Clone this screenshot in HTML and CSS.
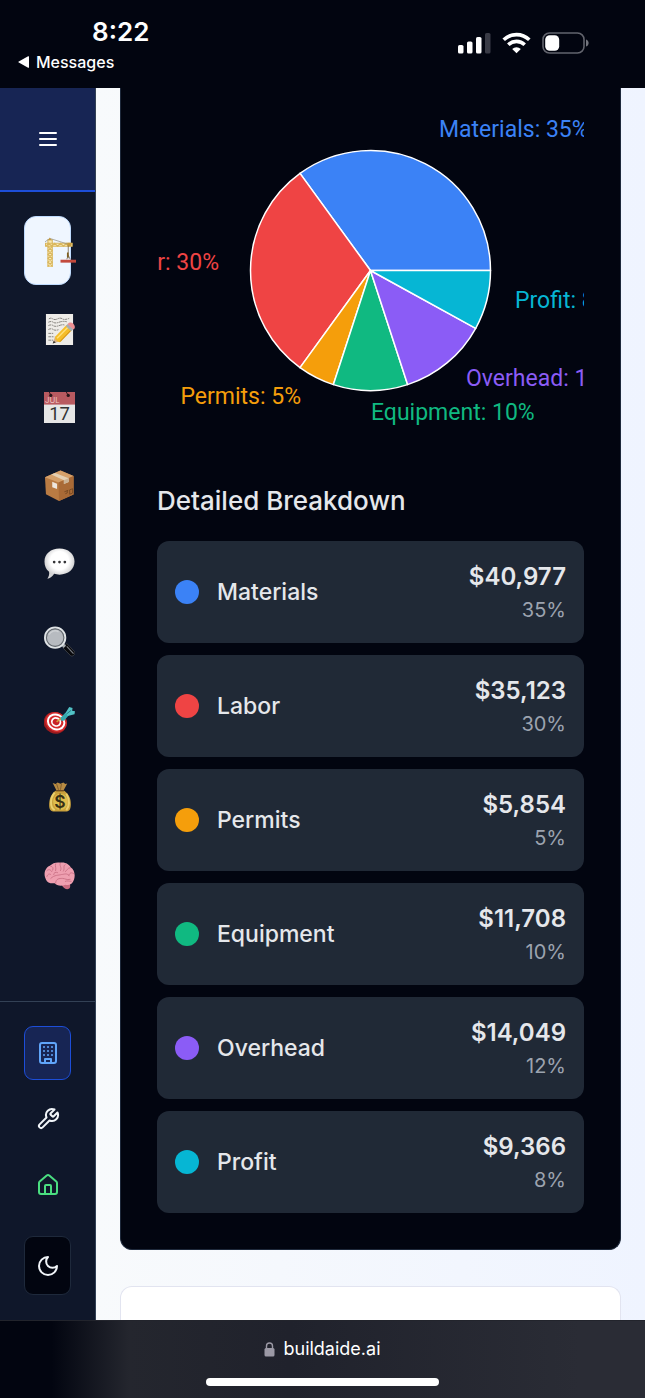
FILE: index.html
```html
<!DOCTYPE html>
<html lang="en">
<head>
<meta charset="utf-8">
<meta name="viewport" content="width=device-width, initial-scale=1">
<title>Detailed Breakdown</title>
<link rel="stylesheet" href="styles.css">
</head>
<body>
<header class="status">
  <div class="status-left">
    <time class="clock">8:22</time>
    <button class="back" type="button">
      <svg width="12" height="12" viewBox="0 0 12 12" aria-hidden="true"><path d="M11 .8v10.400a.6.6 0 0 1-.9.500L.8 6.600a.7.7 0 0 1 0-1.200L10.100.300a.6.6 0 0 1 .9.500z" fill="#fff"/></svg>
      Messages
    </button>
  </div>
  <div class="status-icons">
    <svg width="33" height="22" viewBox="0 0 33 22" aria-label="Signal" fill="#fff"><rect x="0" y="13" width="5.500" height="8.500" rx="1.600"/><rect x="9" y="9.500" width="5.500" height="12" rx="1.600"/><rect x="18" y="5" width="5.500" height="16.500" rx="1.600"/><rect x="27" y="1" width="5.500" height="20.500" rx="1.600" fill="#393b46"/></svg>
    <svg width="29" height="22" viewBox="0 0 29 22" aria-label="Wi-Fi" fill="none" stroke="#fff" stroke-width="3.600"><path d="M1.700 7.800a18.300 18.300 0 0 1 25.600 0"/><path d="M6.300 12.700a11.800 11.800 0 0 1 16.400 0"/><path d="M14.500 21.300l-4.300-4.300a6.200 6.200 0 0 1 8.600 0z" fill="#fff" stroke="none"/></svg>
    <svg width="47" height="22" viewBox="0 0 47 22" aria-label="Battery"><rect x="1" y="1" width="41" height="20" rx="6.500" fill="none" stroke="#62646d" stroke-width="1.600"/><rect x="3.200" y="3.200" width="14" height="15.600" rx="4.500" fill="#fff"/><path d="M44 7.500c3.500 1 3.500 6 0 7z" fill="#72747c"/></svg>
  </div>
</header>

<div class="app">
  <aside class="sidebar">
    <div class="sidebar-head">
      <button class="menu" type="button" aria-label="Menu"><svg width="18" height="16" viewBox="0 0 18 16" stroke="#fff" stroke-width="2" stroke-linecap="round"><path d="M1 2h16M1 8h16M1 14h16"/></svg></button>
    </div>
    <nav class="tools" aria-label="Tools">
      <button class="tool active" type="button" aria-label="Construction">
        <svg viewBox="0 0 32 32"><g fill="none" stroke="#d9b65c" stroke-width="1.100"><path d="M3 32V4h4.500v28zM.5 7.500h27.500v3H.5z" fill="#f8e9b6"/><path d="M3 11l4.500 4L3 19l4.500 4L3 27l4.500 4M7.500 11L3 15l4.500 4L3 23l4.500 4L3 31"/><path d="M1 10.500l3-3 3 3 3-3 3 3 3-3 3 3 3-3 3 3 3-3"/></g><path d="M0 6L5 2.500l19 6" fill="none" stroke="#8e8b80" stroke-width=".7"/><path d="M3.500 4l1.500-2.500L6.500 4zM23 7h4v3.500h-4z" fill="#c79b3c"/><path d="M24 10v13M22.500 24l1.500-4 2 4" fill="none" stroke="#76634a" stroke-width=".8"/><path d="M23.500 17v5" stroke="#806020" stroke-width="1.700"/><path d="M16 24.500h16v3H16z" fill="#c34a3d"/></svg>
      </button>
      <button class="tool" type="button" aria-label="Estimate notes">
        <svg viewBox="0 0 32 32"><path d="M2 0h28v32H2z" fill="#eeece8"/><g fill="none" stroke="#77756f" stroke-width=".9" stroke-dasharray="3 .7 1.500 .5"><path d="M5 5q2-1.500 4 0t5 0 5 0 7-.5M4.500 8.500q3-1.500 5 0t6 0 8-.5M4.500 12q3-1.500 5 0t6 0 6-.5M4.500 16q3-1.500 5 0t6 0M4.500 20h5M4.500 23.500h6M4.500 27h5"/></g><path d="M9 30.500l2.500-7.500 5 5z" fill="#d9b184"/><path d="M9 30.500l1-3 2.200 2z" fill="#333"/><path d="M11.500 23.500L23.500 11l5.500 5.500L17 29c-2.500.5-6-2.500-5.500-5.500z" fill="#f5bd28"/><path d="M13.500 25L26 12.500" stroke="#ffe07a" stroke-width="1.500"/><path d="M16.500 28.500L28.500 16" stroke="#c98819" stroke-width="1"/><path d="M22.500 12.300l2.300-2.300 5.500 5.500-2.300 2.300z" fill="#a4adb4"/><path d="M24.300 10.500c1.500-2.500 4.500-2 6.200-.2s2 4.200-.2 5.700z" fill="#ec8e92"/></svg>
      </button>
      <button class="tool" type="button" aria-label="Calendar">
        <svg viewBox="0 0 32 32"><path d="M0 0h32v32H0z" fill="#e6e6e6"/><path d="M0 0h32v13H0z" fill="#b85a60"/><circle cx="7" cy="3.500" r="1.700" fill="#29171b"/><circle cx="25" cy="3.500" r="1.700" fill="#29171b"/><path d="M5.500 0l1.500 3.500M23 0l2 3.500" stroke="#29171b"/><text class="cal-month" x="1" y="11.500">JUL</text><text class="cal-day" x="16" y="29" text-anchor="middle">17</text></svg>
      </button>
      <button class="tool" type="button" aria-label="Materials">
        <svg viewBox="0 0 32 32"><path d="M1 7.500L17 .5l13.500 5.700v19L15.500 32 2 25z" fill="#b97b43"/><path d="M1 7.500L17 .5l13.500 5.700L15 13z" fill="#d5a06a"/><path d="M15 13l15.500-6.800v19L15.500 32z" fill="#a96a36"/><path d="M7.500 4.700l4-1.700L25.500 8.500v4l-5 2V10.700z" fill="#e5d0b3"/><path d="M20.500 10.700l5-2.200v4l-5 2z" fill="#cab295"/><path d="M8.500 12l5 2.200v5.500l-5-2z" fill="#eee7df"/><path d="M21 22.500l4-1.500M22 24.500l2-.8v-2.500M26.500 20.500l3-1.200v4.500l-3 1.200z" fill="none" stroke="#6e431f" stroke-width=".8"/></svg>
      </button>
      <button class="tool" type="button" aria-label="Messages">
        <svg viewBox="0 0 32 32"><defs><radialGradient id="bubble" cy=".4"><stop offset=".6" stop-color="#fff"/><stop offset="1" stop-color="#d2d2d3"/></radialGradient></defs><path d="M16 .5c9 0 15.500 5.500 15.500 13.500S25 27.500 16 27.500c-2 0-4-.2-5.500-.8-2 3-4.500 4.800-7 5 1.600-2.200 2.200-4.700 1.700-7.200C2 22 .5 18.500.5 14 .5 6 7 .5 16 .5z" fill="url(#bubble)"/><g fill="#343437"><circle cx="10.500" cy="14.500" r="1.400"/><circle cx="16" cy="14.500" r="1.400"/><circle cx="21.500" cy="14.500" r="1.400"/></g></svg>
      </button>
      <button class="tool" type="button" aria-label="Search">
        <svg viewBox="0 0 32 32"><path d="M19.500 22.500l4-4.500L31.500 26.500c1.500 2.500-1.500 5.500-4 4.200z" fill="#08090c" stroke="#4b4e55" stroke-width=".7"/><path d="M23.500 21l7 7.500" stroke="#777a80" stroke-width="1.300"/><path d="M18.500 18.500l3 3" stroke="#a9afb3" stroke-width="3.500"/><circle cx="11.500" cy="12" r="10.500" fill="#b7bbc0" stroke="#dfe3e5" stroke-width="2"/><circle cx="11.500" cy="12" r="9" fill="none" stroke="#62686e" stroke-width="1.100"/><path d="M5 9c2-4 7-5 10-3" fill="none" stroke="#cdd0d3" stroke-width="1.500"/></svg>
      </button>
      <button class="tool" type="button" aria-label="Goals">
        <svg viewBox="0 0 32 32"><g transform="translate(0 1)"><ellipse cx="11.500" cy="18.500" rx="12" ry="11" fill="#9f1b1e" transform="rotate(25 11.500 18.500)"/><ellipse cx="12.500" cy="17.500" rx="11.500" ry="10" fill="#d42b2c" transform="rotate(25 12.500 17.500)"/><ellipse cx="12.500" cy="17.500" rx="8.700" ry="7.500" fill="none" stroke="#fff" stroke-width="2" transform="rotate(25 12.500 17.500)"/><ellipse cx="12.500" cy="17.500" rx="4.500" ry="4" fill="#c92327" stroke="#fff" stroke-width="1.800" transform="rotate(25 12.500 17.500)"/><path d="M13 17.500L20 12" stroke="#d0a43f" stroke-width="1.500"/><path d="M17 13.500l5-5.500 4 2-5 6-3 .5z" fill="#36a9ad"/><path d="M22 8.500L26 2l3.500 1-.5 3 3 .5-.5 3-7 2z" fill="#51c1c5"/><path d="M23 9.500l5-4" stroke="#237e86"/></g></svg>
      </button>
      <button class="tool" type="button" aria-label="Budget">
        <svg viewBox="0 0 32 32"><path d="M9 1l3 1 2-1.500 3 1.200 3-1.200 2 1.500 2-.5-4 7.500h-7z" fill="#b78b43"/><path d="M13 2l2 6M18 2l-1 6" stroke="#775327" stroke-width=".8"/><path d="M12 9h9c5 4 7 8.500 6.700 14.500-.2 5.500-2 7-5.500 7H11c-4 0-5.700-2-5.700-6.500C5.300 18 7 12.500 12 9z" fill="#c9a13c"/><path d="M11 11c-5 6-5 15 0 18M23 12c4 7 3 13 0 17" stroke="#ead06e" fill="none" stroke-width="2"/><ellipse cx="17" cy="20.500" rx="7.500" ry="8.500" fill="#dfbd4d"/><path d="M12.500 9h8" stroke="#6f4c20" stroke-width="1.400"/><text class="bag-sign" x="16.500" y="27" text-anchor="middle">$</text></svg>
      </button>
      <button class="tool" type="button" aria-label="Insights">
        <svg viewBox="0 0 32 32"><path d="M18 25c2 5 7 6.500 8.500 4 1-1.500.5-3.500 0-5z" fill="#c96b80"/><path d="M2 20C-1 15 1 8 6 6c3-3 7-4 11-3.200 5-.8 9 1.800 10.500 4.700 4 2.500 5 8.500 3.500 12.500-1.500 5-5 6.500-9 5.500-4 2-9 1-11-1.500C7 24.500 3 23.500 2 20z" fill="#ee9fb0"/><g fill="none" stroke="#c96f84" stroke-width=".9" stroke-linecap="round"><path d="M3 17c1-3 3-3 4-2M3 11c2-2 4-1 5 1M7 6.500c2 0 3 2 2 4M12 4c-1 3 1 4 0 7M17 3c-2 3 2 4 0 8M22 4.500c-3 2 0 4-2 7M27 8c-3 0-3 3-5 4M30.500 14c-3-2-4 0-5 2M7 19c4-4 8-3 11-4 3 0 5-2 8 1M12 24c0-5 4-5 7-5s4 2 8 1M10 15c0-2 2-3 4-2M22 22c2-1 4 0 6 0"/></g></svg>
      </button>
    </nav>
    <div class="modes">
      <button class="mode selected" type="button" aria-label="Commercial"><svg class="line-icon" viewBox="0 0 24 24"><rect x="4" y="2" width="16" height="20" rx="2"/><path d="M9 22v-4h6v4M8 6h.01M16 6h.01M12 6h.01M12 10h.01M12 14h.01M16 10h.01M16 14h.01M8 10h.01M8 14h.01"/></svg></button>
      <button class="mode" type="button" aria-label="Contractor"><svg class="line-icon" viewBox="0 0 24 24"><path d="M14.700 6.300a1 1 0 0 0 0 1.400l1.600 1.600a1 1 0 0 0 1.400 0l3.770-3.770a6 6 0 0 1-7.940 7.940l-6.910 6.910a2.120 2.120 0 0 1-3-3l6.910-6.910a6 6 0 0 1 7.940-7.940l-3.760 3.760z"/></svg></button>
      <button class="mode home" type="button" aria-label="Home"><svg class="line-icon" viewBox="0 0 24 24"><path d="M15 21v-8a1 1 0 0 0-1-1h-4a1 1 0 0 0-1 1v8"/><path d="M3 10a2 2 0 0 1 .709-1.528l7-5.999a2 2 0 0 1 2.582 0l7 5.999A2 2 0 0 1 21 10v9a2 2 0 0 1-2 2H5a2 2 0 0 1-2-2z"/></svg></button>
      <button class="theme" type="button" aria-label="Toggle dark mode"><svg class="line-icon" viewBox="0 0 24 24"><path d="M12 3a6 6 0 0 0 9 9 9 9 0 1 1-9-9z"/></svg></button>
    </div>
  </aside>

  <main class="content">
    <section class="card">
      <svg class="chart" viewBox="0 0 427 360" role="img" aria-label="Cost breakdown by category">
        <g stroke="#fff" stroke-width="1.500" stroke-linejoin="round">
          <path fill="#3b82f6" d="M213.500 182.500H333.500A120 120 0 0 0 143 85.400z"/>
          <path fill="#ef4444" d="M213.500 182.500L143 85.400A120 120 0 0 0 143 279.600z"/>
          <path fill="#f59e0b" d="M213.500 182.500L143 279.600A120 120 0 0 0 176.400 296.600z"/>
          <path fill="#10b981" d="M213.500 182.500L176.400 296.600A120 120 0 0 0 250.600 296.600z"/>
          <path fill="#8b5cf6" d="M213.500 182.500L250.600 296.600A120 120 0 0 0 318.700 240.300z"/>
          <path fill="#06b6d4" d="M213.500 182.500L318.700 240.300A120 120 0 0 0 333.500 182.500z"/>
        </g>
        <g class="chart-labels">
          <text x="282" y="49" fill="#3b82f6">Materials: 35%</text>
          <text x="62" y="182" fill="#ef4444" text-anchor="end">Labor: 30%</text>
          <text x="144" y="316" fill="#f59e0b" text-anchor="end">Permits: 5%</text>
          <text x="214" y="332" fill="#10b981">Equipment: 10%</text>
          <text x="309" y="298" fill="#8b5cf6">Overhead: 12%</text>
          <text x="358" y="220" fill="#06b6d4">Profit: 8%</text>
        </g>
      </svg>
      <h2 class="heading">Detailed Breakdown</h2>
      <ul class="rows">
        <li class="row"><span class="dot materials"></span><span class="name">Materials</span><span class="figures"><strong class="amount">$40,977</strong><span class="share">35%</span></span></li>
        <li class="row"><span class="dot labor"></span><span class="name">Labor</span><span class="figures"><strong class="amount">$35,123</strong><span class="share">30%</span></span></li>
        <li class="row"><span class="dot permits"></span><span class="name">Permits</span><span class="figures"><strong class="amount">$5,854</strong><span class="share">5%</span></span></li>
        <li class="row"><span class="dot equipment"></span><span class="name">Equipment</span><span class="figures"><strong class="amount">$11,708</strong><span class="share">10%</span></span></li>
        <li class="row"><span class="dot overhead"></span><span class="name">Overhead</span><span class="figures"><strong class="amount">$14,049</strong><span class="share">12%</span></span></li>
        <li class="row"><span class="dot profit"></span><span class="name">Profit</span><span class="figures"><strong class="amount">$9,366</strong><span class="share">8%</span></span></li>
      </ul>
    </section>
    <section class="next-card"></section>
  </main>
</div>

<footer class="browser-bar">
  <button class="address" type="button">
    <svg width="11" height="15" viewBox="0 0 11 15" aria-hidden="true"><path d="M2.500 7V4a3 3 0 0 1 6 0v3" fill="none" stroke="#9b99a5" stroke-width="1.400"/><rect x=".5" y="6" width="10" height="8.500" rx="1.500" fill="#9b99a5"/></svg>
    buildaide.ai
  </button>
  <div class="home-bar"></div>
</footer>
</body>
</html>
```

FILE: styles.css
```css
* { box-sizing: border-box; }

body {
  margin: 0;
  height: 100vh;
  display: flex;
  flex-direction: column;
  overflow: hidden;
  background: #020510;
  color: #e5e7eb;
  font-family: Inter, "Liberation Sans", sans-serif;
}

button {
  margin: 0;
  padding: 0;
  border: 0;
  background: none;
  color: inherit;
  font: inherit;
}

svg { display: block; flex: none; }

/* Phone status bar */
.status {
  flex: none;
  height: 88px;
  padding: 14px 56px 0 18px;
  display: flex;
  justify-content: space-between;
  color: #fff;
}
.clock {
  display: block;
  padding-left: 74px;
  font-size: 26px;
  font-weight: 600;
  line-height: 36px;
}
.back {
  display: flex;
  align-items: center;
  gap: 6px;
  font-size: 16px;
  font-weight: 500;
  line-height: 24px;
}
.status-icons {
  display: flex;
  gap: 11px;
  padding-top: 18px;
}

.app {
  flex: 1;
  min-height: 0;
  display: flex;
}

/* Sidebar */
.sidebar {
  flex: none;
  width: 96px;
  display: flex;
  flex-direction: column;
  border-right: 1px solid #334155;
  background: #0f172a;
}
.sidebar-head {
  height: 104px;
  display: flex;
  align-items: center;
  justify-content: center;
  border-bottom: 2px solid #1d4ed8;
  background: #172554;
}
.menu { padding: 15px; }
.tools {
  flex: 1;
  display: flex;
  flex-direction: column;
  gap: 9px;
  padding: 24px;
}
.tool {
  height: 69px;
  display: flex;
  align-items: center;
  padding: 2px 0 0 20px;
}
.tool svg {
  width: 31px;
  height: 31px;
}
.active {
  border: 1px solid #bfdbfe;
  border-radius: 12px;
  background: #eff6ff;
}
.cal-month { font-size: 8px; fill: #efc6c6; }
.cal-day { font-family: Roboto, sans-serif; font-size: 19px; fill: #333; }
.bag-sign { font-size: 18px; font-weight: 600; fill: #373015; }

.modes {
  display: flex;
  flex-direction: column;
  gap: 12px;
  padding: 24px 24px 25px;
  border-top: 1px solid #334155;
}
.mode, .theme {
  height: 54px;
  display: flex;
  align-items: center;
  justify-content: center;
  border-radius: 9px;
  color: #f1f5f9;
}
.selected {
  border: 1px solid #1d4ed8;
  background: #172554;
  color: #60a5fa;
}
.home { color: #4ade80; }
.theme {
  height: 59px;
  margin-top: 12px;
  border: 1px solid #1e293b;
  background: #020510;
}
.line-icon {
  width: 24px;
  height: 24px;
  fill: none;
  stroke: currentColor;
  stroke-width: 2;
  stroke-linecap: round;
  stroke-linejoin: round;
}

/* Page content */
.content {
  flex: 1;
  min-width: 0;
  display: flex;
  flex-direction: column;
  gap: 36px;
  padding: 0 24px;
  overflow: hidden;
  background: linear-gradient(90deg, #f8fafc, #eff4ff);
}
.card {
  flex: none;
  padding: 0 36px 36px;
  border: 1px solid #1e293b;
  border-top: 0;
  border-radius: 0 0 12px 12px;
  background: #020510;
}
.chart {
  width: 100%;
  height: 360px;
  overflow: hidden;
}
.chart-labels {
  font-family: Roboto, "Liberation Sans", sans-serif;
  font-size: 23px;
}
.heading {
  margin: 36px 0 24px;
  font-size: 26px;
  font-weight: 500;
  line-height: 33px;
}
.rows {
  display: grid;
  gap: 12px;
  margin: 0;
  padding: 0;
  list-style: none;
}
.row {
  display: flex;
  align-items: center;
  gap: 18px;
  padding: 18px;
  border-radius: 12px;
  background: #202936;
}
.dot {
  width: 24px;
  height: 24px;
  border-radius: 50%;
}
.materials { background: #3b82f6; }
.labor { background: #ef4444; }
.permits { background: #f59e0b; }
.equipment { background: #10b981; }
.overhead { background: #8b5cf6; }
.profit { background: #06b6d4; }
.name {
  font-size: 23px;
  font-weight: 500;
}
.figures {
  margin-left: auto;
  display: grid;
  text-align: right;
}
.amount {
  font-size: 24px;
  font-weight: 600;
  line-height: 36px;
}
.share {
  color: #9ca3af;
  font-size: 20px;
  line-height: 30px;
}
.next-card {
  flex: 1;
  border: 1px solid #e2e4f0;
  border-bottom: 0;
  border-radius: 12px 12px 0 0;
  background: #fff;
}

/* Browser address bar */
.browser-bar {
  flex: none;
  height: 78px;
  display: flex;
  flex-direction: column;
  align-items: center;
  gap: 17px;
  padding-top: 16px;
  border-top: 1px solid #22242c;
  background: linear-gradient(90deg, #020510 8%, #24262e 20%, #20222c 45%, #2a2c35 90%);
}
.address {
  display: flex;
  align-items: center;
  gap: 8px;
  color: #fff;
  font-size: 18px;
  line-height: 24px;
}
.home-bar {
  width: 36%;
  height: 8px;
  border-radius: 4px;
  background: #fff;
}
```
